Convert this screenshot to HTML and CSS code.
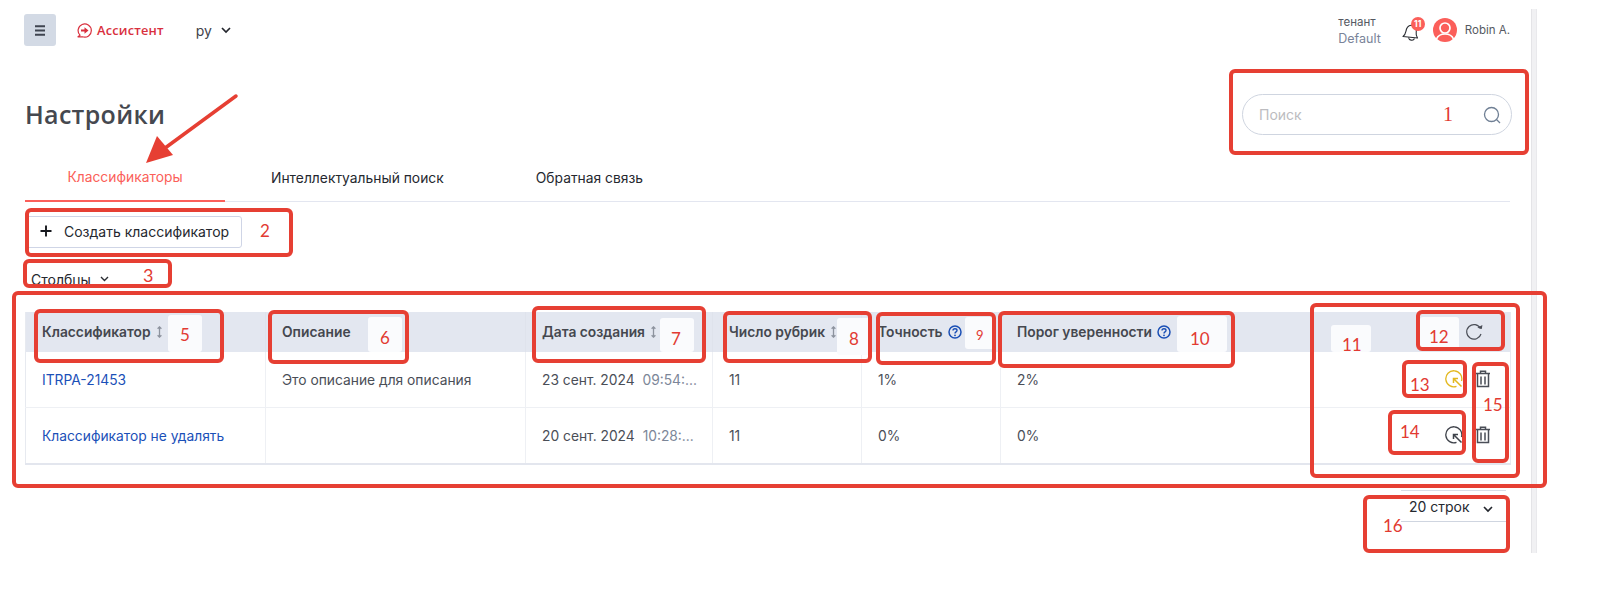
FILE: index.html
```html
<!DOCTYPE html>
<html lang="ru">
<head>
<meta charset="utf-8">
<title>Настройки</title>
<link rel="stylesheet" href="styles.css">
</head>
<body>
<div class="page">
  <main class="content">
    <header class="topbar">
      <button class="menu-btn" aria-label="Меню">
        <svg width="12" height="11" viewBox="0 0 12 11"><path d="M1 1.200h10M1 5.500h10M1 9.800h10" stroke="#3f4450" stroke-width="1.900" fill="none"/></svg>
      </button>
      <div class="brand">
        <svg width="15" height="15" viewBox="0 0 15 15" fill="none"><path d="M3 12.200A6.600 6.600 0 1 1 5.500 13.800H1z" stroke="#d9303e" stroke-width="1.200" stroke-linejoin="round"/><path d="M4 6.500h3.500V4.300L11.500 7.500l-4 3.200V8.500H4z" fill="#d9303e"/></svg>
        <span>Ассистент</span>
      </div>
      <div class="lang">
        <span>ру</span>
        <svg width="10" height="7" viewBox="0 0 10 7"><path d="M1 1l4 4 4-4" stroke="#23262d" stroke-width="1.700" fill="none"/></svg>
      </div>
      <div class="user-area">
        <div class="tenant"><span class="tenant-label">тенант</span><span class="tenant-name">Default</span></div>
        <div class="bell">
          <svg width="20" height="22" viewBox="0 0 20 22" fill="none"><path d="M1 15.500c2.800-1.800 2.600-4.500 3.500-7.500C5.500 5 8.500 3.500 11 4.800c2.500 1.300 3.800 3.800 3.200 6.700-.4 2 .3 3.800 1.300 5.500z" stroke="#2a2d33" stroke-width="1.100" stroke-linejoin="round"/><path d="M6.500 16.500c.3 2.800 4.800 3.800 6 1" stroke="#2a2d33" stroke-width="1.100"/></svg>
          <span class="badge">11</span>
        </div>
        <span class="avatar">
          <svg width="24" height="24" viewBox="0 0 24 24" fill="none"><circle cx="12" cy="12" r="12" fill="#fb5f5a"/><circle cx="12" cy="10" r="5" stroke="#fff" stroke-width="1.700"/><path d="M3.500 21c1.500-3.500 4.500-5 8.500-5s7 1.500 8.500 5" stroke="#fff" stroke-width="1.700"/></svg>
        </span>
        <span class="user-name">Robin A.</span>
      </div>
    </header>

    <section class="title-row">
      <h1>Настройки</h1>
      <div class="search">
        <span>Поиск</span>
        <svg width="18" height="18" viewBox="0 0 18 18" fill="none"><circle cx="8.500" cy="8.500" r="7" stroke="#6f7f94" stroke-width="1.300"/><path d="M13.500 13.500l3.500 3.500" stroke="#6f7f94" stroke-width="1.300"/></svg>
      </div>
    </section>

    <nav class="tabs">
      <a class="tab tab-active">Классификаторы</a>
      <a class="tab tab-second">Интеллектуальный поиск</a>
      <a class="tab tab-third">Обратная связь</a>
    </nav>

    <div class="create-row">
      <button class="create-btn">
        <svg width="12" height="12" viewBox="0 0 12 12"><path d="M6 .5v11M.5 6h11" stroke="#17191e" stroke-width="1.900"/></svg>
        <span>Создать классификатор</span>
      </button>
    </div>

    <div class="columns-row">
      <span>Столбцы</span>
      <svg width="9" height="6" viewBox="0 0 9 6"><path d="M1 1l3.500 3.500L8 1" stroke="#2a2d33" stroke-width="1.400" fill="none"/></svg>
    </div>

    <table class="grid">
      <colgroup>
        <col class="c1"><col class="c2"><col class="c3"><col class="c4"><col class="c5"><col class="c6"><col class="c7">
      </colgroup>
      <thead>
        <tr>
          <th><span class="th-in">Классификатор <svg class="sort" viewBox="0 0 7 14"><path d="M3.500 1v12M1.300 3.200L3.500 1l2.200 2.200M1.300 10.800L3.500 13l2.200-2.200" fill="none" stroke="#8d939e" stroke-width="1.500"/></svg></span></th>
          <th><span class="th-in">Описание</span></th>
          <th><span class="th-in">Дата создания <svg class="sort" viewBox="0 0 7 14"><path d="M3.500 1v12M1.300 3.200L3.500 1l2.200 2.200M1.300 10.800L3.500 13l2.200-2.200" fill="none" stroke="#8d939e" stroke-width="1.500"/></svg></span></th>
          <th><span class="th-in">Число рубрик <svg class="sort" viewBox="0 0 7 14"><path d="M3.500 1v12M1.300 3.200L3.500 1l2.200 2.200M1.300 10.800L3.500 13l2.200-2.200" fill="none" stroke="#8d939e" stroke-width="1.500"/></svg></span></th>
          <th><span class="th-in">Точность <svg class="help" viewBox="0 0 14 14"><circle cx="7" cy="7" r="6" fill="none" stroke="#1a4fb5" stroke-width="1.500"/><path d="M5 5.500C5 4.300 6 3.700 7 3.700s2 .7 2 1.700c0 1.500-2 1.500-2 3" fill="none" stroke="#1a4fb5" stroke-width="1.400"/><circle cx="7" cy="10.300" r=".9" fill="#1a4fb5"/></svg><svg class="sort" viewBox="0 0 7 14"><path d="M3.500 1v12M1.300 3.200L3.500 1l2.200 2.200M1.300 10.800L3.500 13l2.200-2.200" fill="none" stroke="#8d939e" stroke-width="1.500"/></svg></span></th>
          <th><span class="th-in">Порог уверенности <svg class="help" viewBox="0 0 14 14"><circle cx="7" cy="7" r="6" fill="none" stroke="#1a4fb5" stroke-width="1.500"/><path d="M5 5.500C5 4.300 6 3.700 7 3.700s2 .7 2 1.700c0 1.500-2 1.500-2 3" fill="none" stroke="#1a4fb5" stroke-width="1.400"/><circle cx="7" cy="10.300" r=".9" fill="#1a4fb5"/></svg><svg class="sort" viewBox="0 0 7 14"><path d="M3.500 1v12M1.300 3.200L3.500 1l2.200 2.200M1.300 10.800L3.500 13l2.200-2.200" fill="none" stroke="#8d939e" stroke-width="1.500"/></svg></span></th>
          <th class="act-head">
            <svg class="refresh" width="18" height="18" viewBox="0 0 18 18" fill="none"><path d="M15.500 5.500A7.300 7.300 0 1 0 16 11" stroke="#4a4e57" stroke-width="1.200"/><path d="M12.300 4.800l4.500 1.200.6-4z" fill="#4a4e57"/></svg>
          </th>
        </tr>
      </thead>
      <tbody>
        <tr>
          <td><a class="link">ITRPA-21453</a></td>
          <td>Это описание для описания</td>
          <td>23 сент. 2024 <span class="time">09:54:...</span></td>
          <td>11</td>
          <td>1%</td>
          <td>2%</td>
          <td class="act">
            <span class="actions">
              <svg width="18" height="18" viewBox="0 0 18 18" fill="none"><path d="M11.500 16.300A8 8 0 1 1 16.500 11" stroke="#e3b81f" stroke-width="1.300"/><path d="M9 9l7.500 7.500M8.500 13V8.500H13" stroke="#e3b81f" stroke-width="1.500"/></svg>
              <svg width="16" height="18" viewBox="0 0 16 18" fill="none"><path d="M1 3.500h14M5.500 3V1.300h5V3M2.500 4v12.500h11V4M6 6.500v8M10 6.500v8" stroke="#4a4e57" stroke-width="1.500"/></svg>
            </span>
          </td>
        </tr>
        <tr>
          <td><a class="link">Классификатор не удалять</a></td>
          <td></td>
          <td>20 сент. 2024 <span class="time">10:28:...</span></td>
          <td>11</td>
          <td>0%</td>
          <td>0%</td>
          <td class="act">
            <span class="actions">
              <svg width="18" height="18" viewBox="0 0 18 18" fill="none"><path d="M11.500 16.300A8 8 0 1 1 16.500 11" stroke="#3f434b" stroke-width="1.300"/><path d="M9 9l7.500 7.500M8.500 13V8.500H13" stroke="#3f434b" stroke-width="1.500"/></svg>
              <svg width="16" height="18" viewBox="0 0 16 18" fill="none"><path d="M1 3.500h14M5.500 3V1.300h5V3M2.500 4v12.500h11V4M6 6.500v8M10 6.500v8" stroke="#4a4e57" stroke-width="1.500"/></svg>
            </span>
          </td>
        </tr>
      </tbody>
    </table>

    <div class="pager-row">
      <div class="pager">
        <span>20 строк</span>
        <svg class="pager-chevron" width="10" height="7" viewBox="0 0 10 7"><path d="M1 1l4 4 4-4" stroke="#23262d" stroke-width="1.600" fill="none"/></svg>
      </div>
    </div>
  </main>
  <div class="scrolltrack"></div>
</div>

<div class="marks">
  <span class="patch p5"></span><span class="patch p6"></span><span class="patch p7"></span><span class="patch p8"></span><span class="patch p9"></span><span class="patch p10"></span><span class="patch p11"></span><span class="patch p12"></span>
  <span class="box b1"></span><span class="box b2"></span><span class="box b3"></span><span class="box big"></span>
  <span class="box b5"></span><span class="box b6"></span><span class="box b7"></span><span class="box b8"></span><span class="box b9"></span><span class="box b10"></span><span class="box b11"></span><span class="box b12"></span><span class="box b13"></span><span class="box b14"></span><span class="box b15"></span><span class="box b16"></span>
  <span class="num n1">1</span><span class="num n2">2</span><span class="num n3">3</span><span class="num n5">5</span><span class="num n6">6</span><span class="num n7">7</span><span class="num n8">8</span><span class="num n9">9</span><span class="num n10">10</span><span class="num n11">11</span><span class="num n12">12</span><span class="num n13">13</span><span class="num n14">14</span><span class="num n15">15</span><span class="num n16">16</span>
  <svg class="arrow" width="100" height="75" viewBox="0 0 100 75"><path d="M95 3L20 58" stroke="#e63f33" stroke-width="3.500" stroke-linecap="round"/><path d="M5 70L16 43 32 62z" fill="#e63f33"/></svg>
</div>
</body>
</html>
```
FILE: styles.css
```css
* { box-sizing: border-box; }
html, body { margin: 0; padding: 0; height: 593px; overflow: hidden; background: #fff; }
body { font-family: Inter, "Liberation Sans", sans-serif; font-size: 14px; color: #45484f; position: relative; }
button { font: inherit; }

.page { display: flex; align-items: flex-start; }
.content { width: 1531px; padding: 14px 21px 0 25px; flex: none; }
.scrolltrack { width: 6px; height: 544px; margin-top: 9px; background: #f1f1f3; border-left: 1px solid #e4e4e7; border-right: 1px solid #e9e9ec; flex: none; }

.topbar { display: flex; align-items: center; height: 32px; margin-left: -1px; }
.menu-btn { width: 32px; height: 32px; background: #d3dae5; border: 0; border-radius: 3px; display: flex; align-items: center; justify-content: center; padding: 0; }
.brand { display: flex; align-items: center; gap: 5px; margin-left: 21px; color: #d9303e; font-family: "Open Sans", sans-serif; font-weight: 600; font-size: 12.800px; letter-spacing: .2px; }
.lang { display: flex; align-items: center; gap: 9px; margin-left: 32px; font-size: 14px; color: #3f434b; }
.user-area { display: flex; align-items: center; margin-left: auto; margin-right: 0; }
.tenant { display: flex; flex-direction: column; gap: 3px; font-size: 11.500px; line-height: 13px; margin-top: 0; margin-right: 1px; }
.tenant-label { color: #555962; }
.tenant-name { color: #7a8499; font-size: 12.500px; }
.bell { position: relative; width: 20px; height: 22px; margin-left: 20px; margin-top: 3px; }
.badge { position: absolute; left: 9px; top: -4px; width: 14px; height: 14px; border-radius: 50%; background: #fb5f5a; color: #fff; font-size: 8.500px; font-weight: 700; line-height: 14px; text-align: center; }
.avatar { margin-left: 11px; width: 24px; height: 24px; display: block; }
.user-name { margin-left: 8px; font-size: 11.500px; color: #555962; }

.title-row { display: flex; align-items: center; justify-content: space-between; margin-top: 48px; height: 41px; padding-right: 0; }
h1 { margin: -2px 0 0; font-family: "Open Sans", sans-serif; font-size: 25px; font-weight: 600; color: #45484f; letter-spacing: .3px; }
.search { width: 270px; height: 41px; border: 1px solid #cfd5e0; border-radius: 21px; display: flex; align-items: center; justify-content: space-between; padding: 0 10px 0 16px; color: #bcbcc0; font-size: 14px; margin-right: -2px; }

.tabs { display: flex; height: 67px; margin-top: 0; border-bottom: 1px solid #e3e6f0; }
.tab { font-size: 13.850px; color: #25282f; display: flex; align-items: center; justify-content: center; height: 67px; padding-top: 18px; }
.tab-active { width: 200px; color: #fb5f5a; border-bottom: 2px solid #fb5f5a; }
.tab-second { margin-left: 46px; }
.tab-third { margin-left: 92px; }

.create-row { margin-top: 14px; }
.create-btn { width: 217px; height: 32px; background: #fff; border: 1px solid #cfd5e6; border-radius: 3px; display: flex; align-items: center; gap: 12px; padding: 0 0 2px 14px; font-size: 14px; color: #25282f; }

.columns-row { display: flex; align-items: center; gap: 9px; height: 20px; margin: 21px 0 0 6px; font-size: 14px; color: #25282f; }

.grid { width: 1485px; table-layout: fixed; border-collapse: collapse; margin-top: 23px; border-left: 1px solid #e7eaf0; border-right: 1px solid #e7eaf0; border-bottom: 2px solid #e3e6ee; }
.c1 { width: 240px; } .c2 { width: 260px; } .c3 { width: 187px; } .c4 { width: 149px; } .c5 { width: 139px; } .c6 { width: 300px; } .c7 { width: 210px; }
.grid thead tr { background: #e3e7f0; height: 40px; }
.grid th { text-align: left; font-weight: 600; font-size: 13.800px; color: #45484f; padding: 0 0 0 16px; border-right: 1px solid #dfe3ec; white-space: nowrap; }
.grid th:nth-child(n+6) { border-right: 0; }
.th-in { display: inline-flex; align-items: center; gap: 5px; }
.sort { width: 7px; height: 12px; }
.help { width: 14px; height: 14px; }
.grid td { height: 55px; padding: 1px 0 0 16px; border-right: 1px solid #eef0f4; border-bottom: 1px solid #eef0f4; font-size: 13.800px; color: #4a4e57; white-space: nowrap; overflow: hidden; }
.grid tbody tr:last-child td { height: 57px; border-bottom: 0; }
.grid td:nth-child(n+6) { border-right: 0; }
.link { color: #1a50b8; }
.time { color: #7c8698; margin-left: 4px; }
.grid th.act-head, .grid td.act { text-align: right; padding: 0 19px 0 0; }
.grid th.act-head { padding-right: 27px; }
.refresh { display: block; margin-left: auto; }
.actions { display: inline-flex; align-items: center; gap: 12px; vertical-align: middle; }

.pager-row { display: flex; justify-content: flex-end; margin-top: 25px; }
.pager { width: 105px; height: 32px; border-top: 1px solid #d8dce5; border-bottom: 1px solid #cfd5e0; display: flex; align-items: center; justify-content: space-between; padding: 0 13px 0 8px; font-size: 14px; color: #25282f; margin-right: 4px; }
.pager-chevron { margin-top: 6px; }

.marks { position: absolute; inset: 0; pointer-events: none; }
.box { position: absolute; border: 4px solid #e63f33; border-radius: 6px; }
.patch { position: absolute; background: #fafbfd; border-radius: 3px; }
.num { position: absolute; color: #e23a32; font-family: Lato, sans-serif; font-size: 17px; line-height: 18px; }
.arrow { position: absolute; left: 141px; top: 93px; }

.b1 { left: 1229px; top: 69px; width: 300px; height: 86px; }
.b2 { left: 25px; top: 208px; width: 268px; height: 49px; }
.b3 { left: 23px; top: 259px; width: 149px; height: 29px; }
.big { left: 12px; top: 291px; width: 1535px; height: 197px; }
.b5 { left: 34px; top: 309px; width: 190px; height: 54px; }
.b6 { left: 268px; top: 310px; width: 141px; height: 54px; }
.b7 { left: 532px; top: 306px; width: 174px; height: 57px; }
.b8 { left: 723px; top: 311px; width: 149px; height: 52px; }
.b9 { left: 876px; top: 312px; width: 120px; height: 53px; }
.b10 { left: 998px; top: 311px; width: 237px; height: 57px; }
.b11 { left: 1310px; top: 303px; width: 210px; height: 175px; }
.b12 { left: 1416px; top: 310px; width: 89px; height: 41px; }
.b13 { left: 1402px; top: 360px; width: 65px; height: 38px; }
.b14 { left: 1388px; top: 410px; width: 78px; height: 45px; }
.b15 { left: 1472px; top: 362px; width: 37px; height: 101px; }
.b16 { left: 1363px; top: 495px; width: 147px; height: 58px; }

.p5 { left: 168px; top: 315px; width: 34px; height: 37px; }
.p6 { left: 368px; top: 317px; width: 34px; height: 35px; }
.p7 { left: 660px; top: 318px; width: 34px; height: 34px; }
.p8 { left: 837px; top: 318px; width: 34px; height: 37px; }
.p9 { left: 965px; top: 317px; width: 30px; height: 32px; }
.p10 { left: 1177px; top: 316px; width: 50px; height: 36px; }
.p11 { left: 1331px; top: 325px; width: 40px; height: 27px; }
.p12 { left: 1420px; top: 317px; width: 39px; height: 34px; }

.n1 { left: 1443px; top: 104px; font-family: "Liberation Serif", serif; font-size: 20px; line-height: 20px; }
.n2 { left: 260px; top: 222px; }
.n3 { left: 143px; top: 266px; font-size: 18px; }
.n5 { left: 180px; top: 326px; }
.n6 { left: 380px; top: 329px; }
.n7 { left: 671px; top: 330px; }
.n8 { left: 849px; top: 330px; }
.n9 { left: 976px; top: 326px; font-size: 13px; }
.n10 { left: 1190px; top: 330px; }
.n11 { left: 1342px; top: 336px; }
.n12 { left: 1429px; top: 328px; }
.n13 { left: 1410px; top: 376px; }
.n14 { left: 1400px; top: 423px; }
.n15 { left: 1483px; top: 396px; }
.n16 { left: 1383px; top: 517px; }
```
